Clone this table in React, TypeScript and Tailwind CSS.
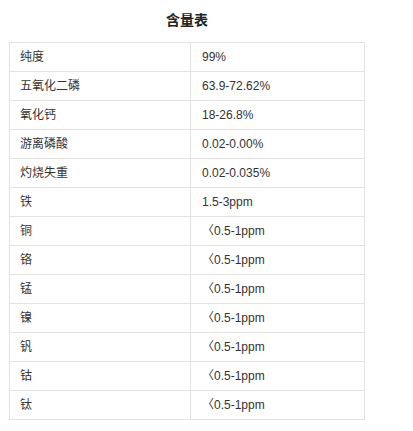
const rows: [string, string][] = [
  ['纯度', '99%'],
  ['五氧化二磷', '63.9-72.62%'],
  ['氧化钙', '18-26.8%'],
  ['游离磷酸', '0.02-0.00%'],
  ['灼烧失重', '0.02-0.035%'],
  ['铁', '1.5-3ppm'],
  ['铜', '〈0.5-1ppm'],
  ['铬', '〈0.5-1ppm'],
  ['锰', '〈0.5-1ppm'],
  ['镍', '〈0.5-1ppm'],
  ['钒', '〈0.5-1ppm'],
  ['钴', '〈0.5-1ppm'],
  ['钛', '〈0.5-1ppm'],
];

export default function App() {
  return (
    <div
      className="w-[413px] h-[431px] bg-white text-[#333]"
      style={{ fontFamily: '"Liberation Sans", "Noto Sans CJK SC", sans-serif' }}
    >
      <div className="pl-[9px]">
        <div className="w-[356px] h-[42px] flex items-center justify-center pb-[1px]">
          <h3 className="text-[14px] font-bold text-[#222]">含量表</h3>
        </div>
        <table className="w-[356px] border-collapse table-fixed text-[12px]">
          <tbody>
            {rows.map(([name, value]) => (
              <tr key={name} className="h-[29px]">
                <td className="w-[181px] border border-[#e3e3e3] pl-[10px] py-0 align-middle">{name}</td>
                <td className="border border-[#e3e3e3] pl-[11px] py-0 align-middle">{value}</td>
              </tr>
            ))}
          </tbody>
        </table>
      </div>
    </div>
  );
}
